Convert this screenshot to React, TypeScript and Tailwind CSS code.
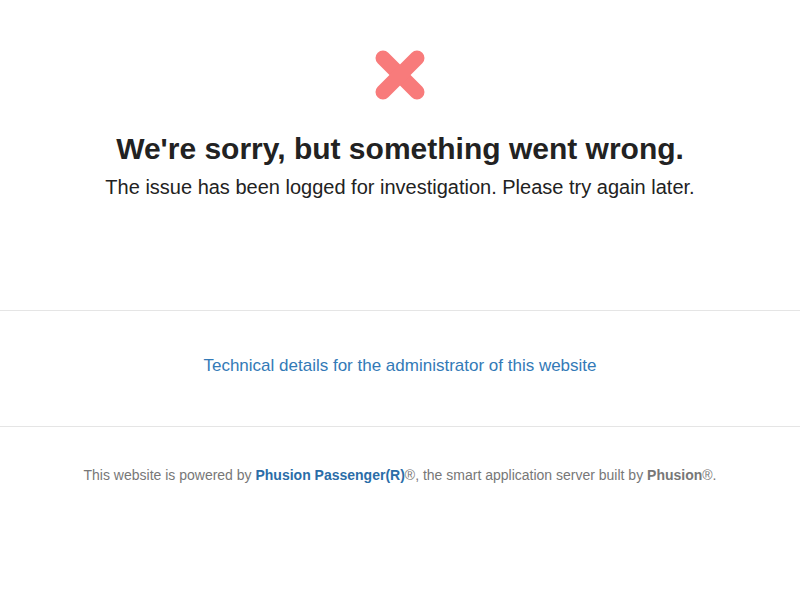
export default function App() {
  return (
    <div className="w-[800px] h-[600px] bg-white" style={{ fontFamily: '"Liberation Sans", Arial, sans-serif' }}>
      <div className="flex flex-col items-center pt-[50px]">
        <svg width="50" height="50" viewBox="0 0 50 50">
          <g stroke="#f87b7b" strokeWidth="15" strokeLinecap="round">
            <line x1="8" y1="8" x2="42" y2="42" />
            <line x1="42" y1="8" x2="8" y2="42" />
          </g>
        </svg>
        <h1 className="mt-[31px] text-[30px] leading-[36px] font-bold text-[#222]">We're sorry, but something went wrong.</h1>
        <p className="mt-[8px] text-[20px] leading-[24px] text-[#222]">The issue has been logged for investigation. Please try again later.</p>
      </div>
      <div className="mt-[111px] border-t border-[#e5e5e5] h-[116px] pb-[6px] flex items-center justify-center">
        <a className="text-[17px] text-[#337ab7]">Technical details for the administrator of this website</a>
      </div>
      <div className="border-t border-[#e5e5e5] pt-[38px] text-center text-[14px] text-[#777]">
        This website is powered by <b className="text-[#2a6da8]">Phusion Passenger(R)</b>®, the smart application server built by <b>Phusion</b>®.
      </div>
    </div>
  );
}
